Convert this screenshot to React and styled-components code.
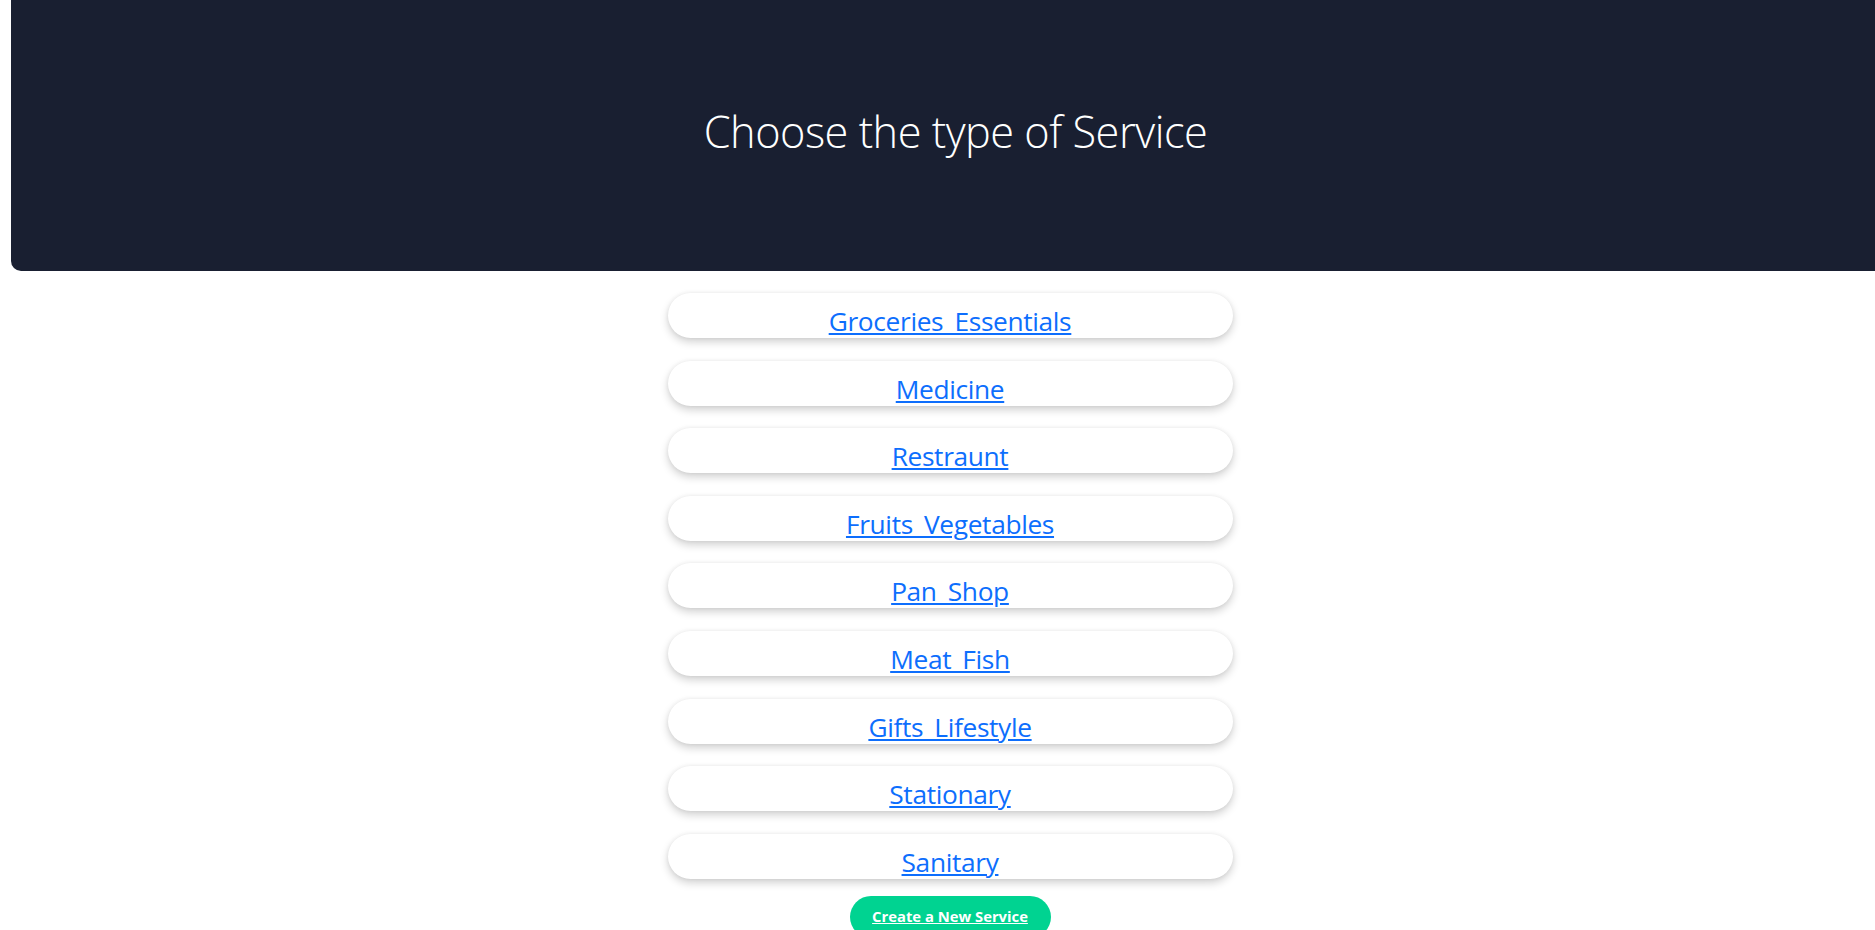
import React from 'react';
import styled, { createGlobalStyle } from 'styled-components';

const services = [
  'Groceries_Essentials',
  'Medicine',
  'Restraunt',
  'Fruits_Vegetables',
  'Pan_Shop',
  'Meat_Fish',
  'Gifts_Lifestyle',
  'Stationary',
  'Sanitary'
];

const GlobalStyle = createGlobalStyle`
  body {
    margin: 0;
    background: #fff;
    font-family: "Open Sans", "Noto Sans", sans-serif;
    overflow: hidden;
  }
`;

const Page = styled.div`
  width: 1900px;
`;

const Header = styled.header`
  margin-left: 11px;
  height: 271px;
  background-color: #191f31;
  border-bottom-left-radius: 10px;
  display: flex;
  align-items: center;
  justify-content: center;
  box-sizing: border-box;
  padding-bottom: 8px;
`;

const Title = styled.h1`
  margin: 0;
  color: #fff;
  font-weight: 300;
  font-size: 43.3px;
  letter-spacing: -0.5px;
`;

const List = styled.div`
  display: flex;
  flex-direction: column;
  align-items: center;
  gap: 22.6px;
  padding-top: 22px;
`;

const Card = styled.div`
  width: 565px;
  height: 45px;
  box-sizing: border-box;
  padding-top: 12px;
  border-radius: 23px;
  background: #fff;
  text-align: center;
  box-shadow: 0 4px 8px rgba(0, 0, 0, 0.18), 0 0 4px rgba(0, 0, 0, 0.06);
`;

const ServiceLink = styled.a`
  color: #0d6efd;
  font-size: 26.3px;
  font-weight: 500;
  text-decoration: underline;
  letter-spacing: -0.35px;
  line-height: 1.25;
  cursor: pointer;
`;

const CreateButton = styled.button`
  margin-top: -5px;
  width: 201px;
  height: 42px;
  border: none;
  border-radius: 21px;
  background-color: #00d391;
  color: #fff;
  font-family: "Open Sans", "Noto Sans", sans-serif;
  font-size: 14.8px;
  font-weight: 700;
  text-decoration: underline;
  padding: 0 0 2px;
  cursor: pointer;
`;

const App = () => {
  return (
    <Page>
      <GlobalStyle />
      <Header>
        <Title>Choose the type of Service</Title>
      </Header>
      <List>
        {services.map((s) => (
          <Card key={s}>
            <ServiceLink>{s}</ServiceLink>
          </Card>
        ))}
        <CreateButton>Create a New Service</CreateButton>
      </List>
    </Page>
  );
};

export default App;
